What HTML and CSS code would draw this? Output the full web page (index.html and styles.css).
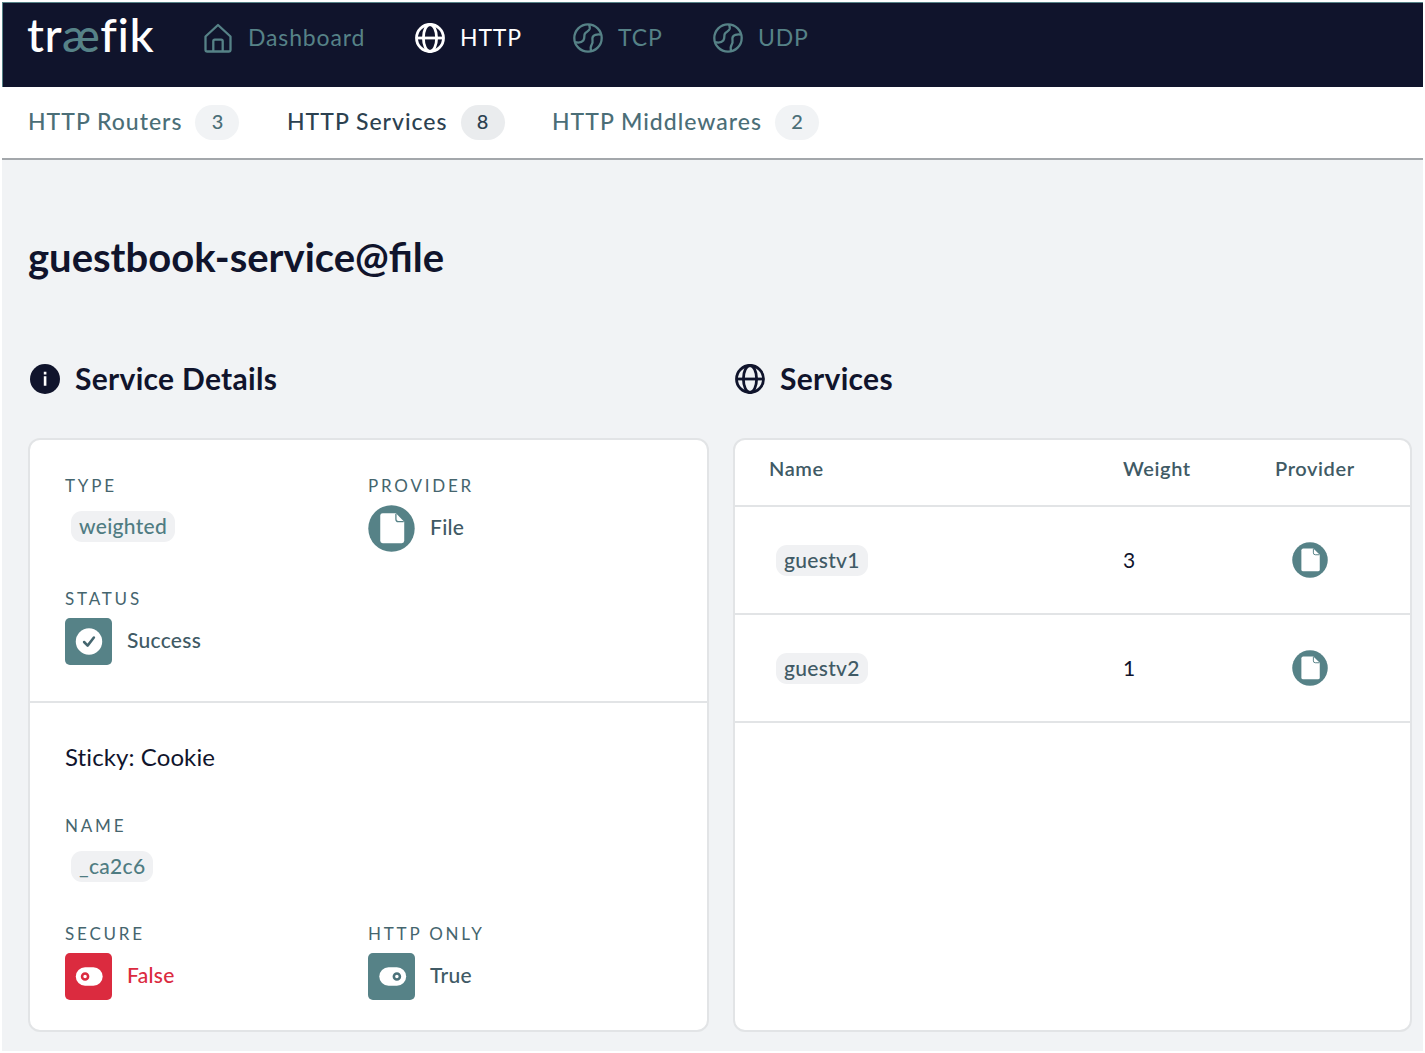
FILE: index.html
```html
<!DOCTYPE html>
<html lang="en">
<head>
<meta charset="utf-8">
<title>Traefik - guestbook-service@file</title>
<link rel="stylesheet" href="styles.css">
</head>
<body>
<svg width="0" height="0" class="sprite" aria-hidden="true">
  <symbol id="globe" viewBox="0 0 30 30"><g fill="none" stroke="currentColor" stroke-width="2.8"><circle cx="15" cy="15" r="13.5"/><ellipse cx="15" cy="15" rx="6.6" ry="13.5"/><path d="M1.5 15h27"/></g></symbol>
  <symbol id="ball" viewBox="0 0 30 30"><g fill="none" stroke="currentColor" stroke-width="2.3" stroke-linejoin="round"><circle cx="15" cy="15" r="13.7"/><path d="M2 19.2c3 .6 6.500.6 8.300-1.700 1.900-2.400.4-4.600 1.500-6.600 1.300-2.300 4.200-2.600 4.900-5.200.3-1.500-.2-3-.6-4.300M18.300 28.300c-.8-2.300-.9-4.800.4-6.700 1-1.500 1.100-2.500.8-4.300-.5-3 .5-4.700 2.900-5.400 2-.6 3.600-.5 5.300-.3"/></g></symbol>
  <symbol id="file" viewBox="0 0 48 48"><circle cx="24" cy="24" r="23.700" fill="#568287"/><path d="M15 8.500h13.500l8.500 8.500v19.500a2.500 2.500 0 0 1-2.500 2.500H15a2.500 2.500 0 0 1-2.500-2.500V11A2.500 2.500 0 0 1 15 8.500z" fill="#fff"/><path d="M28.500 9v5.500a2.500 2.500 0 0 0 2.500 2.500h5.500" fill="none" stroke="#568287" stroke-width="1.300"/></symbol>
</svg>
<div class="app">
  <header class="topbar">
    <div class="logo">tr<span>æ</span>fik</div>
    <a class="nav"><svg class="ico" viewBox="0 0 30 30" fill="none" stroke="currentColor" stroke-width="2.300" stroke-linejoin="round"><path d="M2.500 13.500L15 2l12.500 11.500v13.200a1.800 1.800 0 0 1-1.800 1.800H4.300a1.800 1.800 0 0 1-1.800-1.800z"/><path d="M10.300 28.500V18.200a1.500 1.500 0 0 1 1.500-1.500h6.400a1.500 1.500 0 0 1 1.500 1.500v10.300"/></svg><span>Dashboard</span></a>
    <a class="nav active"><svg class="ico"><use href="#globe"/></svg><span>HTTP</span></a>
    <a class="nav"><svg class="ico"><use href="#ball"/></svg><span>TCP</span></a>
    <a class="nav"><svg class="ico"><use href="#ball"/></svg><span>UDP</span></a>
  </header>
  <nav class="subnav">
    <a class="tab"><span>HTTP Routers</span><b>3</b></a>
    <a class="tab current"><span>HTTP Services</span><b>8</b></a>
    <a class="tab"><span>HTTP Middlewares</span><b>2</b></a>
  </nav>
  <main>
    <h1>guestbook-service@file</h1>
    <div class="columns">
      <section>
        <h2><svg class="ico" viewBox="0 0 30 30"><circle cx="15" cy="15" r="15" fill="currentColor"/><path d="M13.800 12.200h2.600v9.600h-2.600zM13.800 7.800h2.600v2.600h-2.600z" fill="#fff"/></svg><span>Service Details</span></h2>
        <div class="card">
          <div class="details">
            <div class="field"><label>TYPE</label><span class="chip">weighted</span></div>
            <div class="field"><label>PROVIDER</label><div class="value"><svg class="big"><use href="#file"/></svg><span>File</span></div></div>
            <div class="field"><label>STATUS</label><div class="value"><svg class="big" viewBox="0 0 48 48"><rect width="48" height="48" rx="5" fill="#568287"/><circle cx="24.500" cy="24" r="13.500" fill="#fff"/><path d="M19.500 24.500l3.600 3.700 6.400-8.200" fill="none" stroke="#45666f" stroke-width="2.600" stroke-linecap="round" stroke-linejoin="round"/></svg><span>Success</span></div></div>
          </div>
          <div class="sticky">
            <h3>Sticky: Cookie</h3>
            <div class="field name"><label>NAME</label><span class="chip">_ca2c6</span></div>
            <div class="pair">
              <div class="field"><label>SECURE</label><div class="value red"><svg class="big" viewBox="0 0 48 48"><rect width="48" height="48" rx="5" fill="#db2b3f"/><rect x="11" y="14.500" width="27.500" height="19" rx="9.500" fill="#fff"/><circle cx="20.500" cy="24" r="3.100" fill="none" stroke="#db2b3f" stroke-width="2.600"/></svg><span>False</span></div></div>
              <div class="field"><label>HTTP ONLY</label><div class="value"><svg class="big" viewBox="0 0 48 48"><rect width="48" height="48" rx="5" fill="#568287"/><rect x="11.500" y="14.500" width="27.500" height="19" rx="9.500" fill="#fff"/><circle cx="29.500" cy="24" r="3.100" fill="none" stroke="#4b727a" stroke-width="2.600"/></svg><span>True</span></div></div>
            </div>
          </div>
        </div>
      </section>
      <section>
        <h2><svg class="ico"><use href="#globe"/></svg><span>Services</span></h2>
        <div class="card">
          <div class="row head"><span>Name</span><span>Weight</span><span>Provider</span></div>
          <div class="row"><span class="chip">guestv1</span><span class="num">3</span><svg class="small"><use href="#file"/></svg></div>
          <div class="row"><span class="chip">guestv2</span><span class="num">1</span><svg class="small"><use href="#file"/></svg></div>
        </div>
      </section>
    </div>
  </main>
</div>
</body>
</html>
```
FILE: styles.css
```css
* { box-sizing: border-box; }
body { margin: 0; padding: 2px; background: #fff; font-family: Lato, "Open Sans", sans-serif; color: #405a65; white-space: nowrap; }
.sprite { display: block; height: 0; }
.app { width: 1421px; height: 1049px; background: #f1f3f5; display: flex; flex-direction: column; }

.topbar { height: 85px; padding: 0 26px 14px; background: #10142c; border-top: 1px solid #568287; border-left: 1px solid #568287; display: grid; grid-template-columns: 174px 212px 158px 140px 140px; align-items: center; color: #568287; }
.logo { margin-left: -2px; padding-bottom: 8px; font-size: 47px; line-height: 56px; font-weight: 500; color: #fff; letter-spacing: 0.600px; }
.logo span { color: #568287; }
.nav { display: flex; align-items: center; gap: 15px; font-size: 23px; line-height: 30px; letter-spacing: 0.850px; }
.nav span { padding-bottom: 2px; }
.active { color: #fff; }
.ico { width: 30px; height: 30px; flex: none; }

.subnav { height: 73px; padding-left: 26px; background: #fff; border-bottom: 2px solid #a3a7ab; display: grid; grid-template-columns: 259px 265px 280px; align-items: center; }
.tab { display: flex; align-items: center; gap: 13px; font-size: 23px; font-weight: 500; letter-spacing: 1px; color: #4b6e77; }
.tab span { padding-bottom: 3px; }
.tab b { width: 44px; height: 35px; border-radius: 18px; background: #f1f3f5; font-size: 20px; font-weight: 500; line-height: 33px; text-align: center; letter-spacing: 0; }
.current { color: #2c4150; }
.current b { background: #eaecee; }

main { flex: 1; padding: 73px 12px 19px 26px; display: flex; flex-direction: column; }
h1, h2, h3 { margin: 0; color: #10142c; }
h1 { font-size: 40px; line-height: 48px; font-weight: 700; }
.columns { flex: 1; margin-top: 82px; display: grid; grid-template-columns: 681px 679px; gap: 24px; }
section { display: flex; flex-direction: column; }
h2 { height: 32px; padding-left: 2px; display: flex; align-items: center; gap: 15px; font-size: 30px; font-weight: 700; letter-spacing: 0.300px; }
h2 span { padding-bottom: 3px; }
.card { flex: 1; margin-top: 43px; border: 2px solid #e2e4e6; border-radius: 12px; background: #fff; overflow: hidden; }

.details { height: 263px; padding: 35px 35px 0; border-bottom: 2px solid #e2e4e6; display: grid; grid-template-columns: 303px 300px; grid-template-rows: 113px 113px; }
.field { display: flex; flex-direction: column; align-items: flex-start; }
label { font-size: 17px; line-height: 22px; letter-spacing: 2.800px; color: #45656e; }
.value { margin-top: 8px; display: flex; align-items: center; gap: 15px; font-size: 21px; font-weight: 500; letter-spacing: 0.300px; line-height: 44px; }
.value span { padding-bottom: 3px; }
.red { color: #db2b3f; }
.big { width: 47px; height: 47px; flex: none; }
.chip { height: 31px; padding: 0 8px; border-radius: 11px; background: #f0f1f3; font-size: 21px; font-weight: 500; line-height: 30px; letter-spacing: 0.300px; }
.field .chip { margin: 14px 0 0 6px; color: #4f7c82; }
.sticky { padding: 38px 35px 0; }
h3 { font-size: 24px; line-height: 32px; font-weight: 400; letter-spacing: 0.100px; font-variant-ligatures: none; }
.name { margin-top: 42px; height: 108px; }
.pair { display: grid; grid-template-columns: 303px 300px; }

.row { height: 108px; padding-left: 34px; border-bottom: 2px solid #e2e4e6; display: grid; grid-template-columns: 354px 152px 120px; align-items: center; font-size: 21px; color: #10142c; }
.row .chip { justify-self: start; margin-left: 7px; color: #405a65; }
.num { padding-bottom: 2px; }
.head { height: 67px; padding-bottom: 10px; color: #405a65; font-size: 20px; font-weight: 600; letter-spacing: 0.600px; }
.small { width: 36px; height: 36px; margin-left: 17px; }
```
